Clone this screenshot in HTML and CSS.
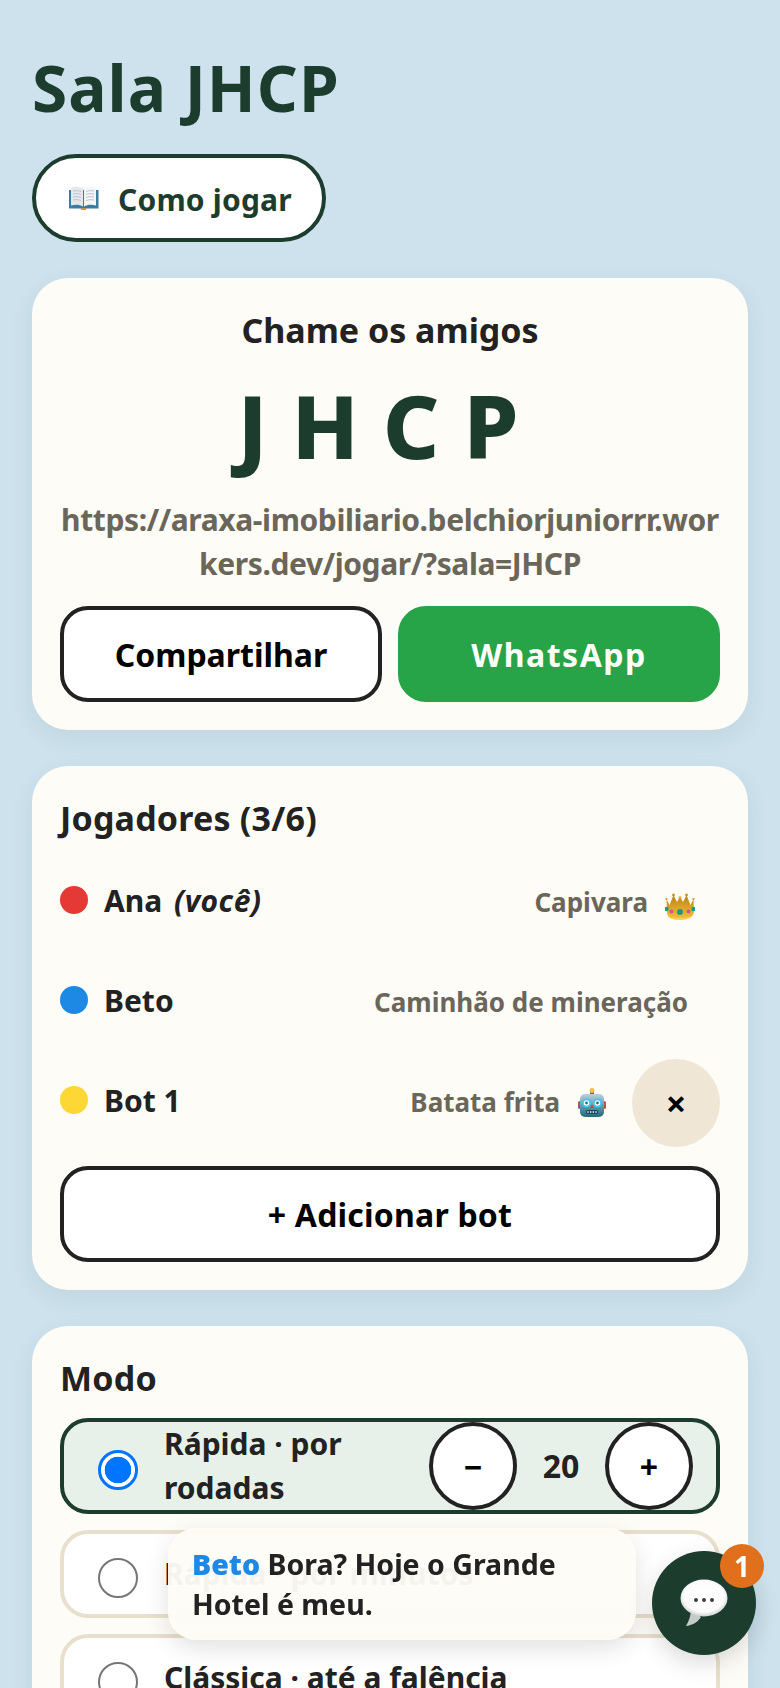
FILE: index.html
```html
<!DOCTYPE html>
<html lang="pt-BR">

<head>
    <meta charset="UTF-8">
    <meta name="viewport" content="width=device-width, initial-scale=1.0">
    <title>Sala JHCP</title>
    <link rel="stylesheet" href="styles.css">
</head>

<body>
    <h1 class="page-title">Sala JHCP</h1>
    <button class="help-btn">
        <svg class="icon-book" viewBox="0 0 31 24">
            <path d="M1 4h29.500v18.500h-12l-3 1.500-3-1.500H1z" fill="#3d7d9c" />
            <path d="M3 1.500c4-1.200 9-1 12 1v18c-3-2-8-2.200-12-1z" fill="#e6e8ee" />
            <path d="M28 1.500c-4-1.200-9-1-12 1v18c3-2 8-2.200 12-1z" fill="#f4f5f8" />
            <path d="M5 5c3-.6 6-.4 8 .6M5 8c3-.6 6-.4 8 .6M5 11c3-.6 6-.4 8 .6M5 14c3-.6 6-.4 8 .6M26 5c-3-.6-6-.4-8 .6M26 8c-3-.6-6-.4-8 .6M26 11c-3-.6-6-.4-8 .6M26 14c-3-.6-6-.4-8 .6" fill="none" stroke="#b9bdc8" stroke-width=".9" />
            <rect x="13" y="22" width="5" height="2" fill="#c9963b" />
        </svg>
        Como jogar
    </button>

    <section class="card">
        <h2 class="invite-title">Chame os amigos</h2>
        <div class="room-code">JHCP</div>
        <p class="room-url">https://araxa-imobiliario.belchiorjuniorrr.workers.dev/jogar/?sala=JHCP</p>
        <div class="share-row">
            <button class="btn">Compartilhar</button>
            <button class="btn btn-green">WhatsApp</button>
        </div>
    </section>

    <section class="card">
        <h2 class="card-title">Jogadores (3/6)</h2>
        <div class="player">
            <span class="dot dot-red"></span>
            <span class="player-name">Ana <em>(você)</em></span>
            <span class="player-piece">Capivara</span>
            <svg class="icon-crown" viewBox="0 0 30 27">
                <defs>
                    <linearGradient id="gold" x1="0" y1="0" x2="0" y2="1">
                        <stop offset="0" stop-color="#b9851c" />
                        <stop offset=".6" stop-color="#dfa72d" />
                        <stop offset="1" stop-color="#f4c13e" />
                    </linearGradient>
                </defs>
                <circle cx="8.500" cy="2" r="1.400" fill="#c8941f" />
                <circle cx="21.500" cy="2" r="1.400" fill="#c8941f" />
                <circle cx="15" cy="4.500" r="1.500" fill="#f0bb35" />
                <circle cx="1.500" cy="6" r="1.100" fill="#c8941f" />
                <circle cx="28.500" cy="6" r="1.100" fill="#c8941f" />
                <path d="M1.500 6l3 6 4-10 3.500 7 3-5 3 5 3.500-7 4 10 3-6 .5 13c-1 6-7 7-13.500 7S3 26 2 20z" fill="url(#gold)" />
                <path d="M2.500 23c3 3 7 4 12.500 4s9.500-1 12.500-4c-3 1.500-7 2-12.500 2s-9.500-.5-12.500-2z" fill="#f7d159" />
                <circle cx="15" cy="19" r="3" fill="#1f9a78" />
                <circle cx="6.500" cy="18.500" r="2" fill="#d2568f" />
                <circle cx="23.500" cy="18.500" r="2" fill="#d2568f" />
                <circle cx="1.500" cy="16" r="2.200" fill="#1f9a78" />
                <circle cx="28.500" cy="16" r="2.200" fill="#1f9a78" />
            </svg>
        </div>
        <div class="player">
            <span class="dot dot-blue"></span>
            <span class="player-name">Beto</span>
            <span class="player-piece player-piece-end">Caminhão de mineração</span>
        </div>
        <div class="player">
            <span class="dot dot-yellow"></span>
            <span class="player-name">Bot 1</span>
            <span class="player-piece">Batata frita</span>
            <svg class="icon-robot" viewBox="0 0 28 29">
                <defs>
                    <linearGradient id="steel" x1="0" y1="0" x2="0" y2="1">
                        <stop offset="0" stop-color="#b6d3dc" />
                        <stop offset=".55" stop-color="#5d98ad" />
                        <stop offset="1" stop-color="#2d6379" />
                    </linearGradient>
                </defs>
                <rect x="0" y="13" width="3" height="8" rx="1.500" fill="#a85a50" />
                <rect x="25" y="13" width="3" height="8" rx="1.500" fill="#a85a50" />
                <rect x="12" y="3" width="4" height="4" fill="#6a5a8c" />
                <circle cx="14" cy="2.500" r="2.500" fill="#f2c23e" />
                <rect x="2" y="6" width="24" height="23" rx="5" fill="url(#steel)" />
                <circle cx="8.500" cy="15" r="3.600" fill="#fff" stroke="#48c1ee" stroke-width="1.800" />
                <circle cx="19.500" cy="15" r="3.600" fill="#fff" stroke="#48c1ee" stroke-width="1.800" />
                <circle cx="8.500" cy="15" r="1.400" fill="#1f6f93" />
                <circle cx="19.500" cy="15" r="1.400" fill="#1f6f93" />
                <path d="M14 16.500l2 3.500h-4z" fill="#c6493f" />
                <rect x="8" y="22" width="12" height="4" rx="1" fill="#23475a" />
                <path d="M10 23v2M12.700 23v2M15.300 23v2M18 23v2" stroke="#e4edf1" stroke-width="1.100" />
            </svg>
            <button class="remove-btn">×</button>
        </div>
        <button class="btn add-bot">+ Adicionar bot</button>
    </section>

    <section class="card">
        <h2 class="card-title">Modo</h2>
        <div class="modes">
            <label class="mode mode-selected">
                <input type="radio" name="mode" checked>
                <span class="mode-name">Rápida · por rodadas</span>
                <span class="stepper">
                    <button class="step-btn">−</button>
                    <span class="step-value">20</span>
                    <button class="step-btn">+</button>
                </span>
            </label>
            <label class="mode">
                <input type="radio" name="mode">
                <span class="mode-name">Rápida · por minutos</span>
            </label>
            <label class="mode">
                <input type="radio" name="mode">
                <span class="mode-name">Clássica · até a falência</span>
            </label>
        </div>
    </section>

    <div class="toast"><b>Beto</b> Bora? Hoje o Grande Hotel é meu.</div>

    <button class="chat-fab">
        <svg class="icon-chat" viewBox="0 0 48 48">
            <defs>
                <radialGradient id="bubble" cx=".5" cy=".45" r=".6">
                    <stop offset="0" stop-color="#ffffff" />
                    <stop offset=".72" stop-color="#fbfbfb" />
                    <stop offset="1" stop-color="#b9bfbc" />
                </radialGradient>
            </defs>
            <path d="M11 30c0 6-2 12-5 17 6-.5 12-4 15-9z" fill="#c5cbc8" />
            <ellipse cx="24" cy="19" rx="23.500" ry="18.500" fill="url(#bubble)" />
            <circle cx="16" cy="21" r="2" fill="#3b3f40" />
            <circle cx="24" cy="21" r="2" fill="#3b3f40" />
            <circle cx="32" cy="21" r="2" fill="#3b3f40" />
        </svg>
        <span class="chat-badge">1</span>
    </button>
</body>

</html>
```

FILE: styles.css
```css
html,
body {
    height: 100%;
    overflow: hidden;
}

body {
    margin: 0;
    padding: 44px 32px 0;
    box-sizing: border-box;
    background-color: #cde2ec;
    color: #222;
    font-family: "Noto Sans", sans-serif;
    font-weight: 700;
}

.page-title {
    margin: 0;
    font-size: 64px;
    line-height: 88px;
    font-weight: 700;
    letter-spacing: 1px;
    color: #1c3d2e;
}

button {
    font-family: inherit;
    cursor: pointer;
}

.help-btn {
    display: flex;
    align-items: center;
    gap: 19px;
    height: 88px;
    margin-top: 22px;
    padding: 3px 30px 0 32px;
    background-color: #fff;
    border: 4px solid #1c3d2e;
    border-radius: 44px;
    color: #1c3d2e;
    font-size: 30px;
    font-weight: 700;
    letter-spacing: 0.2px;
}

.icon-book {
    width: 31px;
    height: 24px;
    margin-top: -3px;
}

.card {
    margin-top: 36px;
    padding: 28px;
    background-color: #fefcf6;
    border-radius: 36px;
    box-shadow: 0 8px 24px rgba(40, 70, 90, 0.08);
}

.invite-title {
    margin: 0;
    text-align: center;
    font-size: 34px;
    line-height: 48px;
    font-weight: 700;
}

.room-code {
    margin-top: 21px;
    text-align: center;
    font-size: 88px;
    line-height: 100px;
    font-weight: 800;
    letter-spacing: 24px;
    color: #1c3d2e;
}

.room-url {
    margin: 23px 0 0;
    text-align: center;
    font-size: 30px;
    line-height: 44px;
    letter-spacing: -0.4px;
    color: #6b665a;
    word-break: break-all;
}

.share-row {
    display: flex;
    gap: 16px;
    margin-top: 20px;
}

.btn {
    flex: 1;
    height: 96px;
    background-color: #fff;
    border: 4px solid #222;
    border-radius: 28px;
    color: #000;
    font-size: 32px;
    font-weight: 700;
}

.btn-green {
    background-color: #28a448;
    border-color: #28a448;
    color: #fff;
    letter-spacing: 1.5px;
}

.card-title {
    margin: 0;
    font-size: 34px;
    line-height: 48px;
    font-weight: 700;
    letter-spacing: 0.2px;
}

.player {
    display: flex;
    align-items: center;
    min-height: 88px;
    margin-top: 12px;
}

.card-title + .player {
    margin-top: 14px;
}

.dot {
    width: 28px;
    height: 28px;
    margin-right: 16px;
    border-radius: 50%;
}

.dot-red {
    background-color: #e53935;
}

.dot-blue {
    background-color: #1e88e5;
}

.dot-yellow {
    background-color: #fdd835;
}

.player-name {
    flex: 1;
    font-size: 30px;
}

.player-name em {
    margin-left: 4px;
    letter-spacing: 0.5px;
}

.player-piece {
    padding-top: 4px;
    font-size: 26px;
    color: #6b665a;
}

.player-piece-end {
    margin-right: 32px;
}

.icon-crown {
    width: 30px;
    height: 27px;
    margin: 12px 25px 0 17px;
}

.icon-robot {
    width: 28px;
    height: 29px;
    margin: 4px 0 0 18px;
}

.remove-btn {
    width: 88px;
    height: 88px;
    margin: 3px 0 -3px 26px;
    padding: 0;
    background-color: #efe6d6;
    border: none;
    border-radius: 50%;
    color: #000;
    font-size: 36px;
    font-weight: 700;
}

.add-bot {
    display: block;
    width: 100%;
    margin-top: 22px;
    letter-spacing: 0.2px;
}

.modes {
    display: flex;
    flex-direction: column;
    gap: 16px;
    margin-top: 16px;
}

.mode {
    display: flex;
    align-items: center;
    gap: 26px;
    min-height: 88px;
    box-sizing: border-box;
    padding: 0 23px 0 34px;
    background-color: #fff;
    border: 4px solid #e8e0cc;
    border-radius: 28px;
    font-size: 30px;
    line-height: 44px;
}

.mode-selected {
    background-color: #e7f1ea;
    border-color: #1c3d2e;
}

.mode input {
    flex: none;
    appearance: none;
    width: 40px;
    height: 40px;
    margin: 8px 0 0;
    background-color: #fff;
    border: 2px solid #767676;
    border-radius: 50%;
}

.mode input:checked {
    border: 3px solid #0075ff;
    background: radial-gradient(circle, #0075ff 13px, #fff 13.600px);
}

.mode-name {
    flex: 1;
}

.stepper {
    display: flex;
    align-items: center;
    flex: none;
}

.step-btn {
    width: 88px;
    height: 88px;
    padding: 0;
    background-color: #fff;
    border: 4px solid #222;
    border-radius: 50%;
    color: #000;
    font-size: 32px;
    font-weight: 700;
}

.step-value {
    width: 88px;
    text-align: center;
    font-size: 32px;
}

.toast {
    position: fixed;
    left: 168px;
    top: 1528px;
    width: 468px;
    height: 112px;
    box-sizing: border-box;
    padding: 16px 24px;
    background-color: rgba(254, 252, 246, 0.96);
    border-radius: 28px;
    box-shadow: 0 8px 24px rgba(0, 0, 0, 0.12);
    font-size: 28.500px;
    line-height: 40px;
}

.toast b {
    color: #1e88e5;
}

.chat-fab {
    position: fixed;
    left: 652px;
    top: 1551px;
    display: flex;
    align-items: center;
    justify-content: center;
    width: 104px;
    height: 104px;
    padding: 0;
    background-color: #1c3d2e;
    border: none;
    border-radius: 50%;
    box-shadow: 0 8px 24px rgba(0, 0, 0, 0.15);
}

.icon-chat {
    width: 48px;
    height: 48px;
}

.chat-badge {
    position: absolute;
    top: -7px;
    right: -8px;
    width: 44px;
    height: 44px;
    background-color: #e0701c;
    border-radius: 50%;
    color: #fff;
    font-size: 28px;
    line-height: 44px;
    font-weight: 700;
}
```
